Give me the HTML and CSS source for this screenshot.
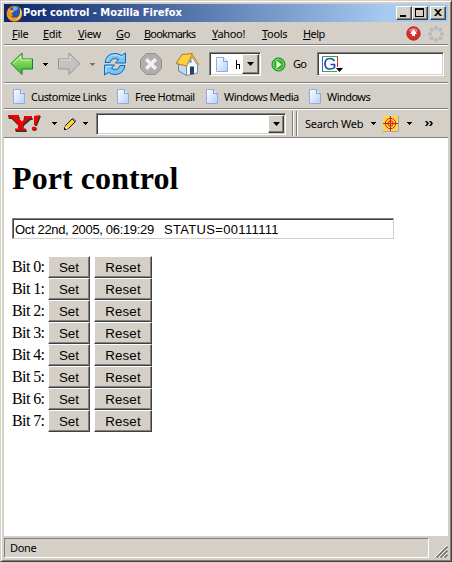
FILE: index.html
```html
<!DOCTYPE html>
<html lang="en">
<head>
<meta charset="utf-8">
<title>Port control - Mozilla Firefox</title>
<link rel="stylesheet" href="styles.css">
</head>
<body>
<svg width="0" height="0" class="defs">
  <defs>
    <linearGradient id="pg" x1="0" y1="0" x2="1" y2="1"><stop offset="0" stop-color="#fff"/><stop offset="1" stop-color="#b4d0f8"/></linearGradient>
    <linearGradient id="gr" x1="0" y1="0" x2="0" y2="1"><stop offset="0" stop-color="#b8f088"/><stop offset="1" stop-color="#35b522"/></linearGradient>
    <symbol id="page" viewBox="0 0 12 15"><path d="M.5.5h7l4 4v10H.5z" fill="url(#pg)" stroke="#8fadde"/><path d="M7.500.5v4h4" fill="#e8f2ff" stroke="#7f9fd4"/></symbol>
    <symbol id="down" viewBox="0 0 5 3"><path d="M0 0h5v1H4v1H3v1H2V2H1V1H0z" fill="currentColor"/></symbol>
  </defs>
</svg>
<div class="window">
  <header class="titlebar">
    <svg class="fox" width="17" height="17" viewBox="0 0 17 17"><circle cx="8.500" cy="8.500" r="7.800" fill="#e87817"/><circle cx="9" cy="7" r="5.500" fill="#2458ae"/><path d="M7 2q4-1 5 2l-3 2-2-1z" fill="#69b2e6"/><path d="M1.500 3.500Q1 8 3 10q2 3.500 6 3 5-.5 5.500-7 2 3 1 6-3 5-8 4.500Q1 15 .8 9z" fill="#f39a20"/><path d="M2 3l2 2h3l1 2-3 1.500L7 11q-3 0-4-2z" fill="#f6a623"/><path d="M14 3q2.500 4 1 8-2 4-6 4 5-2 5-7z" fill="#ffd541"/></svg>
    <h2 class="title">Port control - Mozilla Firefox</h2>
    <div class="controls">
      <span class="ctl"><svg width="12" height="10"><path d="M2 7h6v2H2z"/></svg></span>
      <span class="ctl"><svg width="12" height="10"><path d="M1 0h9v9H1zM2 2v6h7V2z" fill-rule="evenodd"/></svg></span>
      <span class="ctl close"><svg width="12" height="10"><path d="M2 1h2l2 2 2-2h2L7 4.500 10 8H8L6 6 4 8H2l3-3.500z"/></svg></span>
    </div>
  </header>
  <nav class="menubar">
    <span class="m1"><u>F</u>ile</span><span class="m2"><u>E</u>dit</span><span class="m3"><u>V</u>iew</span><span class="m4"><u>G</u>o</span><span class="m5"><u>B</u>ookmarks</span><span class="m6"><u>Y</u>ahoo!</span><span class="m7"><u>T</u>ools</span><span class="m8"><u>H</u>elp</span>
    <svg class="update" width="15" height="15" viewBox="0 0 15 15"><circle cx="7.500" cy="7.500" r="6.700" fill="#d92c2c" stroke="#a83030"/><path d="M3 4q4-4 9 0l-1 2H4z" fill="#ef7474"/><path d="M7.500 3l3.500 5H9v2H6V8H4z" fill="#fff"/></svg>
    <svg class="throbber" width="16" height="16" viewBox="0 0 16 16"><g fill="#b4b9bd"><circle cx="8" cy="2" r="1.900"/><circle cx="12.300" cy="3.700" r="1.900"/><circle cx="14" cy="8" r="1.900"/><circle cx="12.300" cy="12.300" r="1.900"/><circle cx="8" cy="14" r="1.900"/><circle cx="3.700" cy="12.300" r="1.900"/><circle cx="2" cy="8" r="1.900"/><circle cx="3.700" cy="3.700" r="1.900"/></g></svg>
  </nav>
  <div class="navbar">
    <svg class="back" width="24" height="24" viewBox="0 0 24 24"><path d="M1 11.500L12 1v6h10.500v10H12v5.500z" fill="url(#gr)" stroke="#188020" stroke-linejoin="round"/><path d="M3 11.500l8-7.500v4h10.500" fill="none" stroke="#d0f8b0"/></svg>
    <svg class="arrow a1" width="5" height="3"><use href="#down"/></svg>
    <svg class="fwd" width="24" height="24" viewBox="0 0 24 24"><path d="M23 11.500L12 1v6H1.500v10H12v5.500z" fill="#c3c2c0" stroke="#989694" stroke-linejoin="round"/><path d="M2.500 8H13V4" fill="none" stroke="#e2e0dc"/></svg>
    <svg class="arrow a2" width="5" height="3"><use href="#down"/></svg>
    <svg class="reload" width="24" height="24" viewBox="0 0 24 24"><g fill="#74c4f5" stroke="#1668b8" stroke-linejoin="round"><path d="M2 10.500Q3.500 1.500 12 1.500q4 0 6.500 2L22.500 1v10H12.500l3-3.500Q9 4.500 7 10.500z"/><path d="M22 13.500Q20.500 22.500 12 22.500q-4 0-6.500-2L1.500 23V13h10l-3 3.500q6.500 3 8.500-3z"/></g><path d="M4 9Q6 3 12 3q4 0 6.500 2.500L21 3.500M3 20.500V14.500h5" fill="none" stroke="#c0e8ff"/></svg>
    <svg class="stop" width="24" height="24" viewBox="0 0 24 24"><path d="M7.500 1.500h9l6 6v9l-6 6h-9l-6-6v-9z" fill="#b0aeac" stroke="#92908e"/><path d="M6 8.500L8.500 6l3.500 3.500L15.500 6 18 8.500 14.500 12l3.500 3.500-2.500 2.500-3.500-3.500L8.500 18 6 15.500 9.500 12z" fill="#f4f2ef"/></svg>
    <svg class="home" width="25" height="25" viewBox="0 0 25 25"><path d="M3.500 12v7l8 4.500V14L7 7z" fill="#c5d8ee" stroke="#6583aa"/><path d="M11.500 23.500V13l6-7.500 5 7.500v8z" fill="#f2f7fd" stroke="#758fae"/><path d="M15 14.500h4v7.500l-4 .7z" fill="#2d4058"/><path d="M1 11.500L7 2.500l10.500-1L11.500 14z" fill="#ffd042" stroke="#a87a18"/><path d="M11.500 14l6-11 6.500 10" fill="none" stroke="#e0a22a" stroke-width="1.500"/><circle cx="15.500" cy="9.500" r="1.300" fill="#3b9ae0"/></svg>
    <div class="url"><svg class="pic" width="12" height="15"><use href="#page"/></svg><svg class="clip" width="4" height="9"><path d="M0 0h1v4h3v5H3V5H1v4H0z"/></svg><span class="drop"><svg width="7" height="4" viewBox="0 0 7 4"><path d="M0 0h7L3.500 4z"/></svg></span></div>
    <svg class="go" width="15" height="15" viewBox="0 0 15 15"><circle cx="7.500" cy="7.500" r="6.500" fill="#32b528" stroke="#188718"/><circle cx="7.500" cy="7.500" r="5.300" fill="none" stroke="#8de078"/><path d="M5.500 3.500l5 4-5 4z" fill="#fff"/></svg>
    <span class="gotext">Go</span>
    <div class="search"><svg width="21" height="16" viewBox="0 0 21 16"><path d="M.5 15V.5H15" fill="none" stroke="#3868d8"/><path d="M1 .5h15" stroke="#30b038"/><path d="M15.500 1v10" stroke="#e02828"/><path d="M0 15.500h15" stroke="#30b038"/><path d="M12.500 5Q11 2.500 8 2.500q-5 0-5 5.300T8 13q3 0 4.500-1.500v-3H8.500" fill="none" stroke="#2346b5" stroke-width="1.700"/><path d="M14 12h7l-3.500 4z"/></svg></div>
  </div>
  <div class="bookmarks">
    <span class="b1"><svg width="12" height="15"><use href="#page"/></svg><b>Customize Links</b></span>
    <span class="b2"><svg width="12" height="15"><use href="#page"/></svg><b>Free Hotmail</b></span>
    <span class="b3"><svg width="12" height="15"><use href="#page"/></svg><b>Windows Media</b></span>
    <span class="b4"><svg width="12" height="15"><use href="#page"/></svg><b>Windows</b></span>
  </div>
  <div class="yahoo">
    <svg class="ylogo" width="33" height="19" viewBox="0 0 33 19"><path d="M1 2h11v2h-2l4 4 4-3h-2V3h9v2h-2l-7 6v4h3v2H8v-2h3v-4L4 4H1z" fill="#333" transform="translate(-.3 1)"/><path d="M0 1h11v2H9.500L14 7.500 18 4h-2V2h8v2h-2l-7 6v4.500h3v2H7v-2h3V10L3 3H0z" fill="#f00000"/><path d="M27 3l6-1-4 10h-2z" fill="#333"/><path d="M26 2l6-1-4 10h-2z" fill="#f00000"/><ellipse cx="26.500" cy="15" rx="2.500" ry="2" fill="#333"/><ellipse cx="26" cy="14.500" rx="2.200" ry="1.900" fill="#f00000"/></svg>
    <svg class="arrow y1" width="5" height="3"><use href="#down"/></svg>
    <svg class="pencil" width="12" height="12" viewBox="0 0 12 12"><path d="M.5 11.500l1-4L8 1l3 3-6.500 6.500z" fill="#ffd42b" stroke="#111"/><path d="M8 1l1-.7L11.700 3 11 4z" fill="#ef9aa4" stroke="#543"/><path d="M1.500 8l2.500 2.500-3 1z" fill="#fff"/><path d="M0 12l.5-2.500 2 2z"/></svg>
    <svg class="arrow y2" width="5" height="3"><use href="#down"/></svg>
    <div class="combo"><span class="drop"><svg width="7" height="4" viewBox="0 0 7 4"><path d="M0 0h7L3.500 4z"/></svg></span></div>
    <i class="grip"></i>
    <span class="sw">Search Web</span>
    <svg class="arrow y3" width="5" height="3"><use href="#down"/></svg>
    <svg class="target" width="16" height="16" viewBox="0 0 16 16"><path d="M0 0h16v16H0z" fill="#ffd64a"/><path d="M0 15.500h15.500V0" fill="none" stroke="#a8a0c8"/><g fill="none" stroke="#d02010"><circle cx="7.500" cy="7.500" r="5.200"/><circle cx="7.500" cy="7.500" r="2.700"/><path d="M7.500 0v15M0 7.500h15"/></g></svg>
    <svg class="arrow y4" width="5" height="3"><use href="#down"/></svg>
    <svg class="chev" width="8" height="5" viewBox="0 0 8 5"><path d="M0 0h2l2 2.500L2 5H0l2-2.500zM4 0h2l2 2.500L6 5H4l2-2.500z"/></svg>
  </div>
  <main class="content">
    <h1>Port control</h1>
    <div class="status-field"><span class="date">Oct 22nd, 2005, 06:19:29</span><span class="state">STATUS=00111111</span></div>
    <div class="bits">
      <div class="bit"><span>Bit 0:</span><button class="set">Set</button><button class="reset">Reset</button></div>
      <div class="bit"><span>Bit 1:</span><button class="set">Set</button><button class="reset">Reset</button></div>
      <div class="bit"><span>Bit 2:</span><button class="set">Set</button><button class="reset">Reset</button></div>
      <div class="bit"><span>Bit 3:</span><button class="set">Set</button><button class="reset">Reset</button></div>
      <div class="bit"><span>Bit 4:</span><button class="set">Set</button><button class="reset">Reset</button></div>
      <div class="bit"><span>Bit 5:</span><button class="set">Set</button><button class="reset">Reset</button></div>
      <div class="bit"><span>Bit 6:</span><button class="set">Set</button><button class="reset">Reset</button></div>
      <div class="bit"><span>Bit 7:</span><button class="set">Set</button><button class="reset">Reset</button></div>
    </div>
  </main>
  <footer class="statusbar">
    <div class="panel">Done</div>
    <svg class="sizer" width="13" height="13" viewBox="0 0 13 13"><g stroke="#fff"><path d="M0 12L12 0M4 12l8-8M8 12l4-4"/></g><g stroke="#77736d" stroke-width="1.700"><path d="M1.500 12.500l11-11M5.500 12.500l7-7M9.500 12.500l3-3"/></g></svg>
  </footer>
</div>
</body>
</html>
```
FILE: styles.css
```css
* { box-sizing: border-box; }
body { margin: 0; background: #d4d0c8; }
.defs { position: absolute; }
svg { display: block; flex: none; }
.window {
  width: 452px; height: 562px; padding: 3px; overflow: hidden;
  display: flex; flex-direction: column;
  background: #d4d0c8;
  border: 1px solid; border-color: #d4d0c8 #404040 #404040 #d4d0c8;
  box-shadow: inset 1px 1px #fff, inset -1px -1px #808080;
  font: 11px/14px "Noto Sans", sans-serif; color: #000;
}
.window > * { flex: none; }
.titlebar {
  height: 18px; display: flex; align-items: center; padding: 0 2px;
  background: linear-gradient(90deg, #0a246a, #a6caf0 86%);
}
.title { margin: 0; flex: 1; white-space: nowrap; color: #fff; font: bold 11px/14px "DejaVu Sans Condensed", "DejaVu Sans", sans-serif; letter-spacing: -.02px; }
.controls { display: flex; }
.ctl, .drop {
  background: #d4d0c8; border: 1px solid; border-color: #fff #404040 #404040 #fff;
  box-shadow: inset -1px -1px #808080;
}
.ctl { width: 16px; height: 14px; padding: 1px; }
.close { margin-left: 2px; }
.menubar { height: 24px; display: flex; align-items: center; padding-left: 8px; border-bottom: 1px solid #fff; box-shadow: inset 0 -1px #808080; }
.menubar span { white-space: nowrap; letter-spacing: -.3px; }
.menubar .m5 { letter-spacing: -.8px; }
.menubar .m8 { letter-spacing: -.6px; }
.menubar u { text-underline-offset: 1px; text-decoration-thickness: 1px; }
.m1 { width: 31px; } .m2 { width: 35px; } .m3 { width: 38px; } .m4 { width: 28px; }
.m5 { width: 68px; } .m6 { width: 50px; } .m7 { width: 41px; } .m8 { width: 103px; }
.throbber { margin-left: 7px; }
.navbar { height: 38px; display: flex; align-items: center; border-bottom: 1px solid #fff; box-shadow: inset 0 -1px #808080; padding-bottom: 1px; }
.back { margin-left: 6px; }
.a1 { margin-left: 9px; }
.fwd { margin-left: 9px; }
.a2 { margin-left: 9px; color: #77736d; }
.reload { margin-left: 8px; }
.stop { margin-left: 12px; }
.home { margin-left: 12px; }
.url, .search, .combo {
  background: #fff; border: 1px solid; border-color: #808080 #fff #fff #808080;
  box-shadow: inset 1px 1px #404040, inset -1px -1px #d4d0c8;
  display: flex; align-items: center;
}
.url { width: 52px; height: 24px; margin-left: 9px; padding: 1px 1px 1px 6px; }
.clip { margin-left: 8px; }
.drop { height: 100%; width: 17px; margin-left: auto; display: flex; align-items: center; justify-content: center; }
.go { margin-left: 10px; }
.gotext { width: 24px; margin-left: 7px; letter-spacing: -.8px; }
.search { width: 127px; height: 24px; padding-left: 4px; }
.bookmarks { height: 26px; display: flex; align-items: center; border-bottom: 1px solid #fff; box-shadow: inset 0 -1px #808080; padding-left: 9px; }
.bookmarks span { display: flex; align-items: center; white-space: nowrap; }
.bookmarks b { font-weight: normal; margin-left: 6px; letter-spacing: -.55px; }
.b1 { width: 104px; } .b2 { width: 89px; } .b3 { width: 103px; }
.yahoo { height: 28px; display: flex; align-items: center; border-bottom: 1px solid #808080; }
.ylogo { margin-left: 4px; }
.y1 { margin-left: 11px; }
.pencil { margin-left: 7px; }
.y2 { margin-left: 7px; }
.combo { width: 190px; height: 22px; margin-left: 8px; padding: 1px 1px 1px 2px; }
.combo .drop { width: 16px; }
.grip { width: 5px; align-self: stretch; margin: 1px 0 1px 6px; border: 1px solid #808080; border-width: 0 1px; box-shadow: inset 1px 0 #fff, 1px 0 #fff; }
.sw { width: 60px; margin-left: 8px; white-space: nowrap; letter-spacing: -.25px; }
.y3 { margin-left: 6px; }
.target { margin-left: 7px; }
.y4 { margin-left: 8px; }
.chev { margin-left: 13px; }
.content { height: 398px; background: #fff; padding: 22px 8px 0; font-family: "Liberation Serif", serif; }
h1 { margin: 0; height: 58px; font: bold 32px/37px "Liberation Serif", serif; letter-spacing: .08px; }
.status-field {
  width: 382px; height: 21px; display: flex; align-items: center; padding: 2px 2px 0;
  border: 1px solid; border-color: #808080 #d4d0c8 #d4d0c8 #808080; box-shadow: inset 1px 1px #404040;
  font: 13px/16px "Liberation Sans", sans-serif; white-space: nowrap;
}
.date { width: 149px; letter-spacing: -.33px; }
.state { letter-spacing: .33px; }
.bits { margin-top: 17px; }
.bit { height: 22px; display: flex; align-items: center; font: 16px/22px "Liberation Serif", serif; }
.bit span { width: 36px; white-space: nowrap; letter-spacing: -.6px; }
button {
  height: 22px; padding: 1px 0 0; font: 13.333px/16px "Liberation Sans", sans-serif; color: #000;
  background: #d4d0c8; border: 1px solid; border-color: #fff #404040 #404040 #fff;
  box-shadow: inset -1px -1px #808080; border-radius: 0;
}
.set { width: 42px; }
.reset { width: 58px; margin-left: 4px; letter-spacing: .15px; }
.statusbar { height: 22px; display: flex; padding-top: 2px; }
.panel { width: 425px; height: 20px; padding: 2px 5px; border: 1px solid; border-color: #808080 #fff #fff #808080; letter-spacing: -.35px; }
.sizer { margin: 7px 0 0 6px; }
```
